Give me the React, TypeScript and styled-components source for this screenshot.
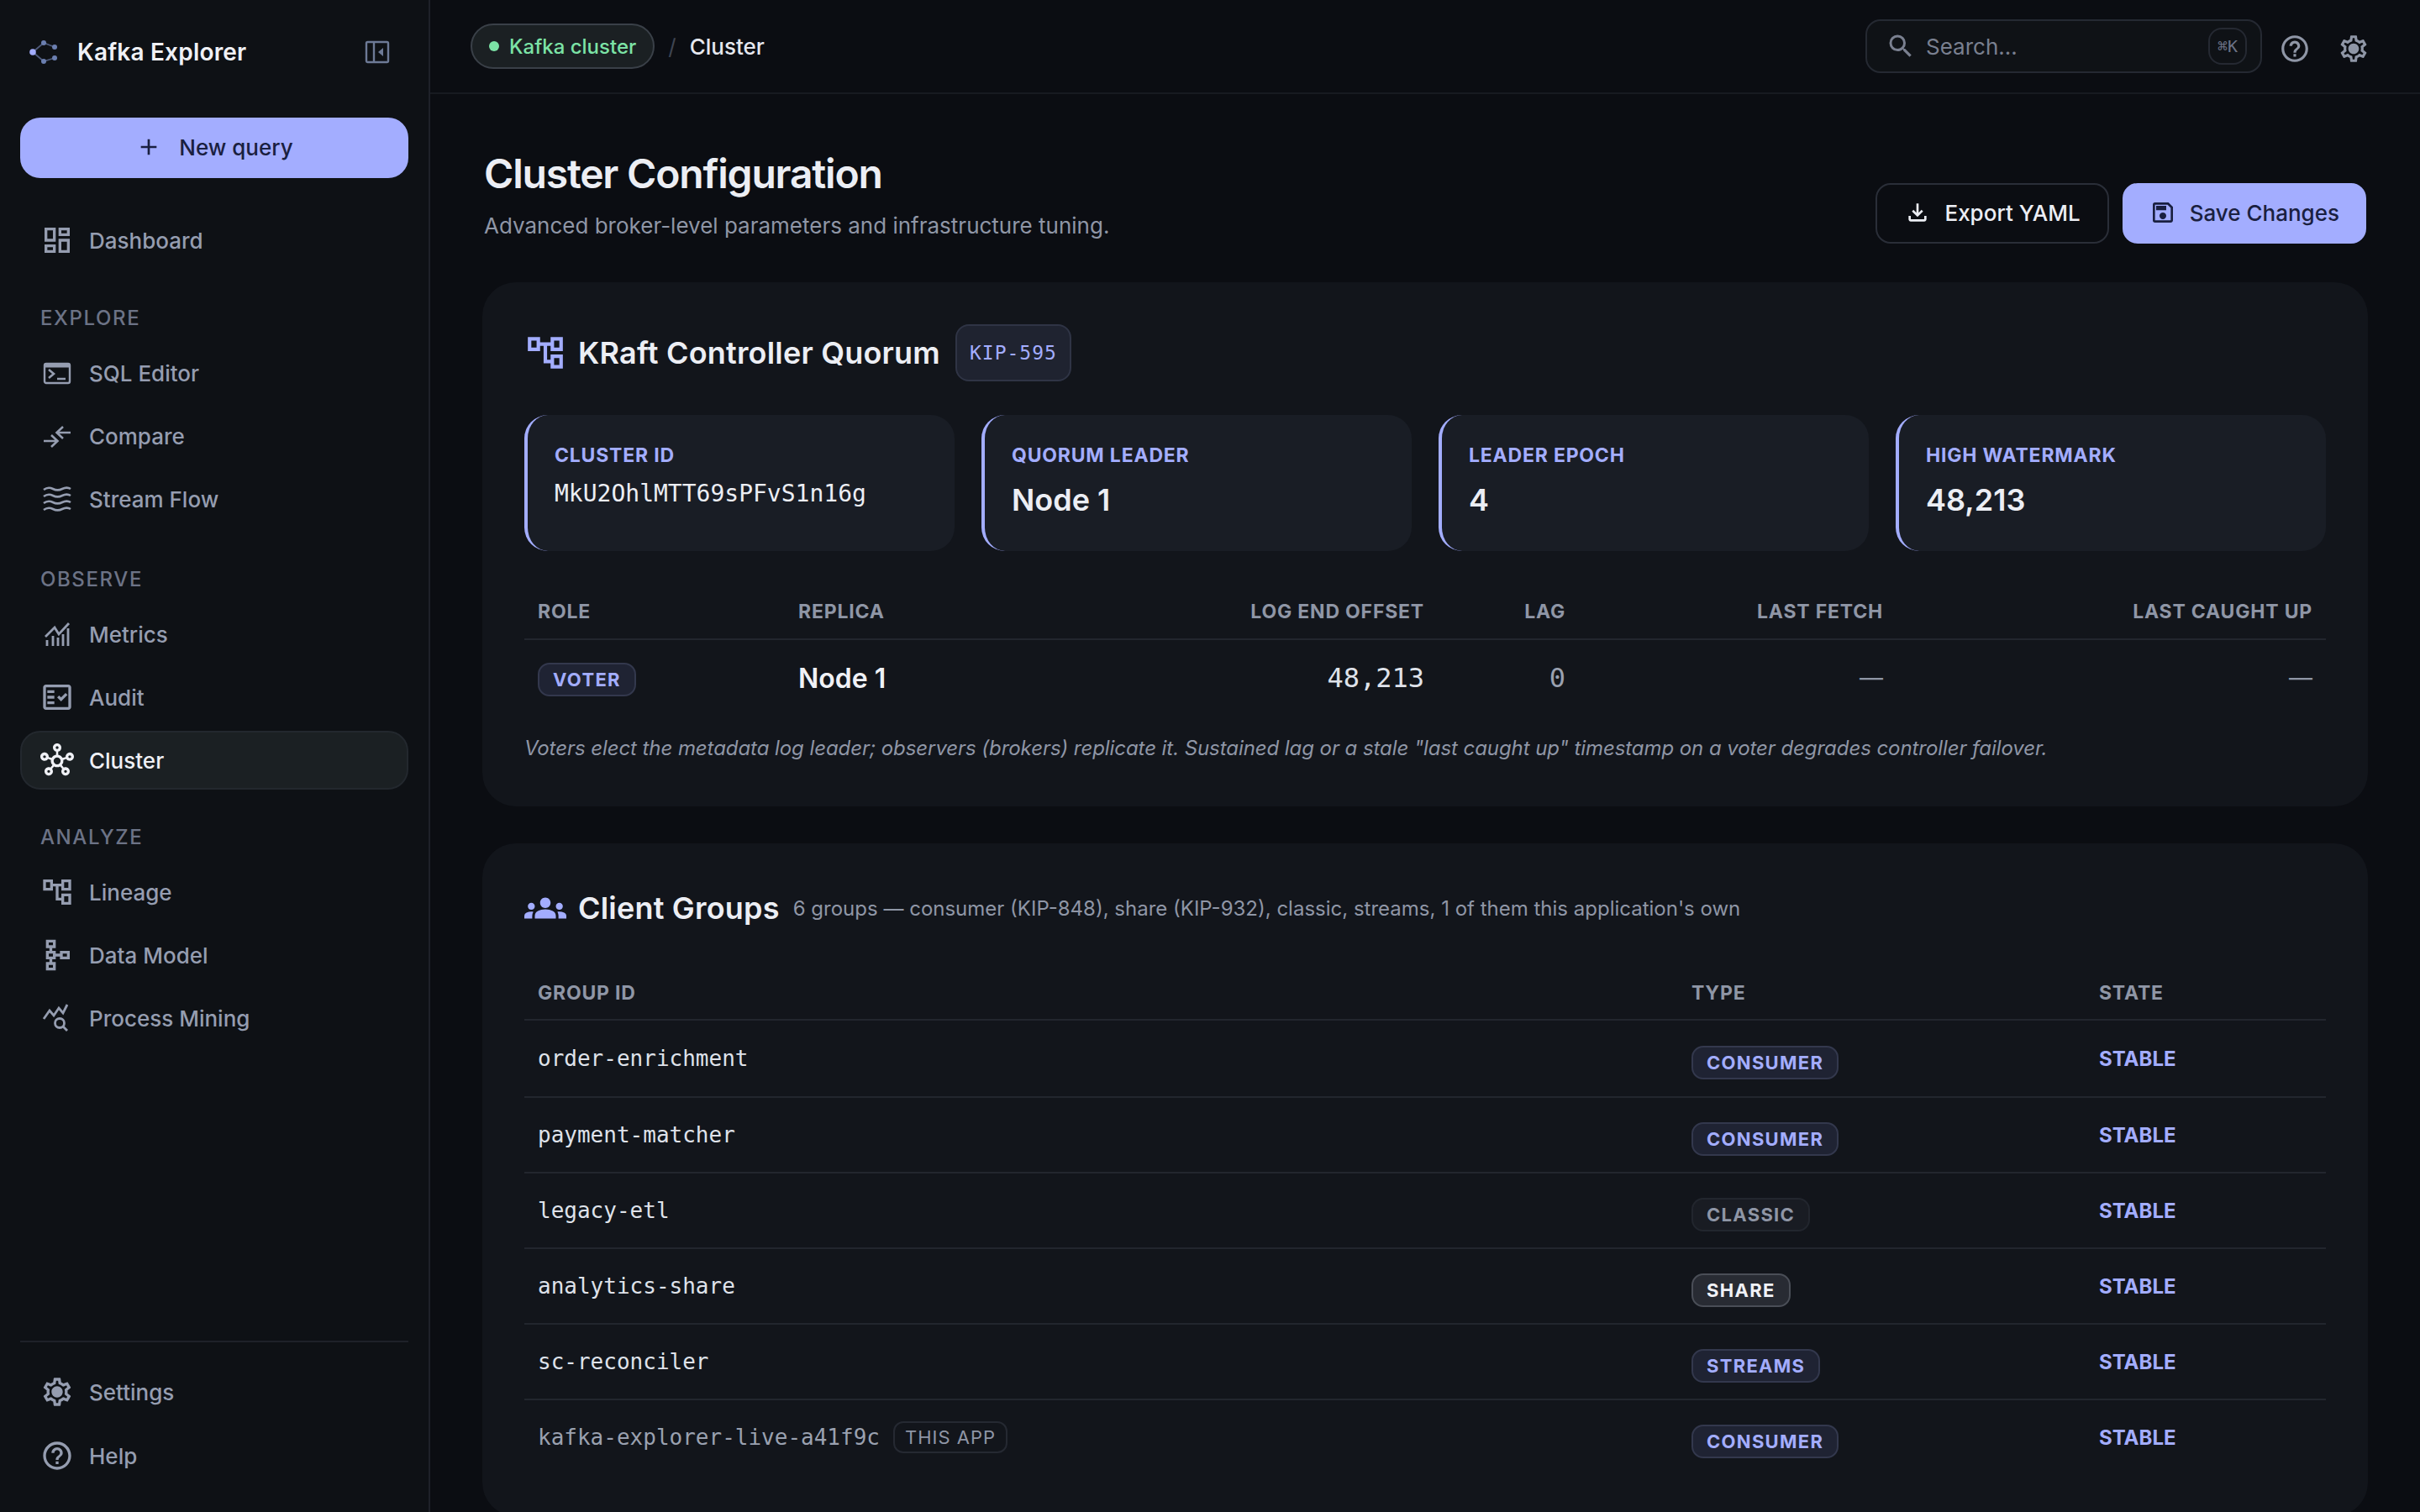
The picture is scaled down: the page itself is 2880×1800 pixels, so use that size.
import React from 'react';
import styled, { createGlobalStyle } from 'styled-components';
import {
  MdAdd,
  MdGroups,
  MdHelpOutline,
  MdOutlineAccountTree,
  MdOutlineDashboard,
  MdOutlineFactCheck,
  MdOutlineFileDownload,
  MdOutlineHub,
  MdOutlineSave,
  MdOutlineSchema,
  MdOutlineSettings,
  MdSearch,
} from 'react-icons/md';

const MONO = '"DejaVu Sans Mono", "Liberation Mono", monospace';

const GlobalStyle = createGlobalStyle`
  html, body {
    margin: 0;
    padding: 0;
    background: #0b0d12;
    font-family: Inter, "Noto Sans", sans-serif;
    color: #eceef4;
  }
  * { box-sizing: border-box; }
`;

const Shell = styled.div`
  display: flex;
  width: 2880px;
  height: 1800px;
  overflow: hidden;
`;

const Sidebar = styled.aside`
  flex: 0 0 512px;
  display: flex;
  flex-direction: column;
  padding: 0 24px 32px;
  background: #0e1115;
  border-right: 2px solid #1e2129;
`;

const Brand = styled.div`
  display: flex;
  align-items: center;
  height: 124px;
  padding-left: 6px;
`;

const BrandName = styled.span`
  margin-left: 22px;
  font-size: 28px;
  font-weight: 600;
  letter-spacing: 0.2px;
  color: #f0f1f6;
`;

const CollapseButton = styled.span`
  display: flex;
  margin-left: auto;
  margin-right: 22px;
`;

const NewQuery = styled.button`
  display: flex;
  align-items: center;
  justify-content: center;
  gap: 20px;
  height: 72px;
  margin-top: 16px;
  padding: 0 0 2px;
  border: 0;
  border-radius: 24px;
  background: #a3adff;
  color: #1a2040;
  font: 500 26px Inter, sans-serif;
`;

const NavSection = styled.nav<{ $gap: number }>`
  display: flex;
  flex-direction: column;
  gap: 5px;
  margin-top: ${(p) => p.$gap}px;
`;

const SectionLabel = styled.div`
  height: 32px;
  margin-bottom: 9px;
  padding-left: 24px;
  font-size: 24px;
  line-height: 32px;
  font-weight: 500;
  letter-spacing: 1.6px;
  color: #6c7386;
`;

const NavItem = styled.a<{ $active?: boolean }>`
  display: flex;
  align-items: center;
  height: 70px;
  padding-left: 22px;
  border: 2px solid ${(p) => (p.$active ? '#23282e' : 'transparent')};
  border-radius: 24px;
  background: ${(p) => (p.$active ? '#1b2023' : 'transparent')};
  color: ${(p) => (p.$active ? '#f0f1f6' : '#959db0')};
  font-size: 26px;
  font-weight: 500;
`;

const NavIcon = styled.span`
  display: flex;
  justify-content: center;
  width: 40px;
  margin-right: 18px;
  font-size: 40px;
`;

const SidebarFooter = styled.div`
  display: flex;
  flex-direction: column;
  gap: 6px;
  margin-top: auto;
  padding-top: 24px;
  border-top: 2px solid #1e2129;
`;

const GearWrap = styled.span`
  position: relative;
  display: flex;

  &::after {
    content: '';
    position: absolute;
    left: 50%;
    top: 50%;
    width: 30%;
    height: 30%;
    border-radius: 50%;
    background: currentColor;
    transform: translate(-50%, -50%);
  }
`;

const Main = styled.main`
  flex: 1;
  min-width: 0;
  display: flex;
  flex-direction: column;
`;

const TopBar = styled.header`
  flex: 0 0 112px;
  display: flex;
  align-items: center;
  padding: 0 60px 0 48px;
  border-bottom: 2px solid #171a20;
`;

const ClusterPill = styled.span`
  display: flex;
  align-items: center;
  gap: 12px;
  height: 54px;
  padding: 0 20px;
  border: 2px solid #3a4048;
  border-radius: 27px;
  background: #1b2023;
  color: #7ce3a6;
  font-size: 24px;
  font-weight: 500;
`;

const StatusDot = styled.i`
  width: 12px;
  height: 12px;
  border-radius: 50%;
  background: #7ce3a6;
`;

const Slash = styled.span`
  margin: 0 16px;
  color: #3f4552;
  font-size: 26px;
`;

const Crumb = styled.span`
  font-size: 26px;
  font-weight: 500;
  color: #e6e8ef;
`;

const SearchBox = styled.div`
  display: flex;
  align-items: center;
  width: 472px;
  height: 64px;
  margin-left: auto;
  padding: 0 16px 0 22px;
  border: 2px solid #252932;
  border-radius: 18px;
  background: #0f1216;
  color: #7a8090;
  font-size: 26px;
`;

const SearchHint = styled.span`
  margin-left: 12px;
`;

const Kbd = styled.kbd`
  display: flex;
  align-items: center;
  justify-content: center;
  width: 46px;
  height: 44px;
  margin-left: auto;
  border: 2px solid #252932;
  border-radius: 16px;
  color: #6c7386;
  font: 20px ${MONO};
`;

const TopIcon = styled.span<{ $gap: number }>`
  display: flex;
  margin: 6px 0 0 ${(p) => p.$gap}px;
  color: #8f96a6;
  font-size: 38px;
`;

const Content = styled.div`
  padding: 62px 62px 0;
`;

const PageHead = styled.div`
  display: flex;
  align-items: flex-end;
  justify-content: space-between;
`;

const PageTitle = styled.h1`
  margin: 0;
  padding-left: 2px;
  font-size: 48px;
  line-height: 66px;
  font-weight: 600;
  letter-spacing: -1.2px;
  color: #eceef4;
`;

const PageSub = styled.p`
  margin: 8px 0 0;
  padding-left: 2px;
  font-size: 26px;
  line-height: 42px;
  color: #8f96a6;
`;

const Actions = styled.div`
  display: flex;
  gap: 16px;
  padding-right: 2px;
`;

const ActionButton = styled.button<{ $primary?: boolean }>`
  display: flex;
  align-items: center;
  gap: 16px;
  height: 72px;
  padding: 0 ${(p) => (p.$primary ? 30 : 32)}px 2px;
  border: 2px solid ${(p) => (p.$primary ? '#a3adff' : '#2a2e38')};
  border-radius: 18px;
  background: ${(p) => (p.$primary ? '#a3adff' : 'transparent')};
  color: ${(p) => (p.$primary ? '#1a2040' : '#eceef4')};
  font: 500 26px Inter, sans-serif;
`;

const Card = styled.section<{ $gap: number }>`
  margin-top: ${(p) => p.$gap}px;
  padding: 50px;
  border-radius: 40px;
  background: #12151b;
`;

const CardHead = styled.div<{ $height: number }>`
  display: flex;
  align-items: center;
  height: ${(p) => p.$height}px;
`;

const CardIcon = styled.span`
  display: flex;
  justify-content: center;
  width: 50px;
  margin-right: 14px;
  color: #a3adff;
  font-size: 50px;
`;

const CardTitle = styled.h2`
  margin: 0;
  font-size: 36px;
  font-weight: 600;
  letter-spacing: 0.2px;
  color: #eceef4;
`;

const KipBadge = styled.span`
  display: flex;
  align-items: center;
  height: 68px;
  margin-left: 18px;
  padding: 0 15px;
  border: 2px solid #2f3445;
  border-radius: 16px;
  background: #1f2330;
  color: #a3adff;
  font: 23px ${MONO};
  letter-spacing: 1px;
`;

const CardSub = styled.span`
  margin-left: 16px;
  font-size: 24px;
  color: #8f96a6;
`;

const StatGrid = styled.div`
  display: grid;
  grid-template-columns: repeat(4, 1fr);
  gap: 32px;
  margin-top: 40px;
`;

const Stat = styled.div`
  height: 162px;
  padding: 32px 32px 0 32px;
  border-left: 4px solid #a3adff;
  border-radius: 28px;
  background: #191d25;
`;

const StatLabel = styled.div`
  font-size: 23px;
  line-height: 32px;
  font-weight: 700;
  letter-spacing: 0.8px;
  color: #a3adff;
`;

const StatValue = styled.div<{ $mono?: boolean }>`
  margin-top: ${(p) => (p.$mono ? 9 : 12)}px;
  font: ${(p) => (p.$mono ? `28px ${MONO}` : '600 36px Inter, sans-serif')};
  line-height: ${(p) => (p.$mono ? 42 : 50)}px;
  color: #eceef4;
`;

const QUORUM_COLS = '310px 300px 477px 168px 378px 511px';
const GROUP_COLS = '1373px 485px 286px';

const Row = styled.div<{ $cols: string; $header?: boolean; $height: number; $top?: number }>`
  display: grid;
  grid-template-columns: ${(p) => p.$cols};
  align-items: center;
  height: ${(p) => p.$height}px;
  margin-top: ${(p) => p.$top ?? 0}px;
  border-bottom: ${(p) => (p.$header ? '2px solid #22262e' : '0')};
`;

const GroupRow = styled(Row)`
  & + & {
    border-top: 2px solid #22262e;
  }
`;

const HeadCell = styled.div<{ $right?: boolean }>`
  padding: 0 16px;
  text-align: ${(p) => (p.$right ? 'right' : 'left')};
  font-size: 23px;
  font-weight: 700;
  letter-spacing: 0.8px;
  color: #8f96a6;
`;

const Cell = styled.div<{ $right?: boolean }>`
  display: flex;
  align-items: center;
  justify-content: ${(p) => (p.$right ? 'flex-end' : 'flex-start')};
  padding: 0 16px;
`;

const Strong = styled.span`
  font-size: 32px;
  font-weight: 600;
  color: #f0f1f6;
`;

const Mono = styled.span<{ $dim?: boolean; $size?: number }>`
  font: ${(p) => p.$size ?? 26}px ${MONO};
  color: ${(p) => (p.$dim ? '#9aa1b0' : '#dfe2ea')};
`;

const Dash = styled.span`
  font-size: 28px;
  color: #8f96a6;
`;

const TONES = {
  indigo: { bg: '#1f2333', border: '#33384d', color: '#a3adff' },
  muted: { bg: '#191c23', border: '#22262e', color: '#8f96a6' },
  light: { bg: '#282b33', border: '#4a4e57', color: '#f0f1f6' },
};

const Badge = styled.span<{ $tone: keyof typeof TONES; $nudge?: number }>`
  display: inline-flex;
  align-items: center;
  height: 40px;
  margin-top: ${(p) => p.$nudge ?? 10}px;
  padding: 0 16px;
  border: 2px solid ${(p) => TONES[p.$tone].border};
  border-radius: 14px;
  background: ${(p) => TONES[p.$tone].bg};
  color: ${(p) => TONES[p.$tone].color};
  font-size: 22px;
  font-weight: 700;
  letter-spacing: 1.3px;
`;

const StateText = styled.span`
  font-size: 24px;
  font-weight: 700;
  color: #a3adff;
`;

const ThisApp = styled.span`
  margin-left: 16px;
  padding: 4px 12px;
  border: 2px solid #252932;
  border-radius: 12px;
  color: #8f96a6;
  font-size: 22px;
  letter-spacing: 1px;
`;

const Note = styled.p`
  margin: 20px 0 0;
  font-size: 24px;
  line-height: 38px;
  font-style: italic;
  letter-spacing: -0.07px;
  color: #8f96a6;
`;

const LogoMark = () => (
  <svg width="40" height="40" viewBox="0 0 40 40" fill="none">
    <path d="M9 20 22 9l13 5M9 20l13 11 13-4" stroke="#4e5a7a" strokeWidth="1.8" />
    <circle cx="9" cy="20" r="3.8" fill="#a3adff" />
    <g fill="#6b7fb0">
      <circle cx="22" cy="9" r="3" />
      <circle cx="35" cy="14" r="3" />
      <circle cx="22" cy="31" r="3" />
      <circle cx="35" cy="27" r="3" />
    </g>
  </svg>
);

const CollapseIcon = () => (
  <svg width="30" height="30" viewBox="0 0 30 30" fill="none" stroke="#6d7a96" strokeWidth="2.4">
    <rect x="2" y="3" width="26" height="24" rx="1.5" />
    <path d="M11 3v24" />
    <path d="M22 10v10l-6-5z" fill="#6d7a96" stroke="none" />
  </svg>
);

const TerminalIcon = () => (
  <svg width="40" height="40" viewBox="0 0 40 40" fill="none" stroke="currentColor">
    <rect x="5" y="9" width="30" height="23" rx="2" strokeWidth="2.4" />
    <path d="M5 11h30" strokeWidth="5" />
    <path d="m10 16 6 5-6 5M20 27h10" strokeWidth="2.6" />
  </svg>
);

const CompareIcon = () => (
  <svg width="40" height="40" viewBox="0 0 40 40" fill="none" stroke="currentColor" strokeWidth="2.6">
    <path d="M36 16H20M27 9l-7.5 7 7.5 7" />
    <path d="M4 26h16M13 19l7.5 7-7.5 7" />
  </svg>
);

const WaterIcon = () => (
  <svg width="40" height="40" viewBox="0 0 40 40" fill="none" stroke="currentColor" strokeWidth="2.6">
    {[9, 17, 25, 33].map((y) => (
      <path key={y} d={`M4 ${y}c4-3 7-3 11-1s7 2 11 0 7-2 10 0`} />
    ))}
  </svg>
);

const MonitoringIcon = () => (
  <svg width="40" height="40" viewBox="0 0 40 40" fill="none" stroke="currentColor" strokeWidth="2.8">
    <path d="M6 23 17 12l5 8L34 7" />
    <path d="M8 34v-7M15 34V22M21 34V24M27 34V20M33 34V13" />
  </svg>
);

const ProcessIcon = () => (
  <svg width="40" height="40" viewBox="0 0 40 40" fill="none" stroke="currentColor" strokeWidth="2.8">
    <path d="m4 21 7-10 5 6 6-9 5 6 5-10" />
    <circle cx="23" cy="26" r="5.5" />
    <path d="m27 30 5 5" />
  </svg>
);

const Gear = () => (
  <GearWrap>
    <MdOutlineSettings />
  </GearWrap>
);

const App: React.FC = () => {
  const quorumHead = ['ROLE', 'REPLICA', 'LOG END OFFSET', 'LAG', 'LAST FETCH', 'LAST CAUGHT UP'];
  const groups: [string, keyof typeof TONES, string][] = [
    ['order-enrichment', 'indigo', 'CONSUMER'],
    ['payment-matcher', 'indigo', 'CONSUMER'],
    ['legacy-etl', 'muted', 'CLASSIC'],
    ['analytics-share', 'light', 'SHARE'],
    ['sc-reconciler', 'indigo', 'STREAMS'],
    ['kafka-explorer-live-a41f9c', 'indigo', 'CONSUMER'],
  ];

  return (
    <>
      <GlobalStyle />
      <Shell>
        <Sidebar>
          <Brand>
            <LogoMark />
            <BrandName>Kafka Explorer</BrandName>
            <CollapseButton>
              <CollapseIcon />
            </CollapseButton>
          </Brand>
          <NewQuery>
            <MdAdd size={32} />
            New query
          </NewQuery>
          <NavSection $gap={39}>
            <NavItem>
              <NavIcon><MdOutlineDashboard /></NavIcon>
              Dashboard
            </NavItem>
          </NavSection>
          <NavSection $gap={42}>
            <SectionLabel>EXPLORE</SectionLabel>
            <NavItem>
              <NavIcon><TerminalIcon /></NavIcon>
              SQL Editor
            </NavItem>
            <NavItem>
              <NavIcon><CompareIcon /></NavIcon>
              Compare
            </NavItem>
            <NavItem>
              <NavIcon><WaterIcon /></NavIcon>
              Stream Flow
            </NavItem>
          </NavSection>
          <NavSection $gap={45}>
            <SectionLabel>OBSERVE</SectionLabel>
            <NavItem>
              <NavIcon><MonitoringIcon /></NavIcon>
              Metrics
            </NavItem>
            <NavItem>
              <NavIcon><MdOutlineFactCheck /></NavIcon>
              Audit
            </NavItem>
            <NavItem $active>
              <NavIcon><MdOutlineHub /></NavIcon>
              Cluster
            </NavItem>
          </NavSection>
          <NavSection $gap={41}>
            <SectionLabel>ANALYZE</SectionLabel>
            <NavItem>
              <NavIcon><MdOutlineAccountTree /></NavIcon>
              Lineage
            </NavItem>
            <NavItem>
              <NavIcon><MdOutlineSchema /></NavIcon>
              Data Model
            </NavItem>
            <NavItem>
              <NavIcon><ProcessIcon /></NavIcon>
              Process Mining
            </NavItem>
          </NavSection>
          <SidebarFooter>
            <NavItem>
              <NavIcon><Gear /></NavIcon>
              Settings
            </NavItem>
            <NavItem>
              <NavIcon><MdHelpOutline /></NavIcon>
              Help
            </NavItem>
          </SidebarFooter>
        </Sidebar>
        <Main>
          <TopBar>
            <ClusterPill>
              <StatusDot />
              Kafka cluster
            </ClusterPill>
            <Slash>/</Slash>
            <Crumb>Cluster</Crumb>
            <SearchBox>
              <MdSearch size={36} />
              <SearchHint>Search...</SearchHint>
              <Kbd>⌘K</Kbd>
            </SearchBox>
            <TopIcon $gap={20}><MdHelpOutline /></TopIcon>
            <TopIcon $gap={32}><Gear /></TopIcon>
          </TopBar>
          <Content>
            <PageHead>
              <div>
                <PageTitle>Cluster Configuration</PageTitle>
                <PageSub>Advanced broker-level parameters and infrastructure tuning.</PageSub>
              </div>
              <Actions>
                <ActionButton>
                  <MdOutlineFileDownload size={32} />
                  Export YAML
                </ActionButton>
                <ActionButton $primary>
                  <MdOutlineSave size={32} />
                  Save Changes
                </ActionButton>
              </Actions>
            </PageHead>

            <Card $gap={46}>
              <CardHead $height={68}>
                <CardIcon><MdOutlineAccountTree /></CardIcon>
                <CardTitle>KRaft Controller Quorum</CardTitle>
                <KipBadge>KIP-595</KipBadge>
              </CardHead>
              <StatGrid>
                <Stat>
                  <StatLabel>CLUSTER ID</StatLabel>
                  <StatValue $mono>MkU2OhlMTT69sPFvS1n16g</StatValue>
                </Stat>
                <Stat>
                  <StatLabel>QUORUM LEADER</StatLabel>
                  <StatValue>Node 1</StatValue>
                </Stat>
                <Stat>
                  <StatLabel>LEADER EPOCH</StatLabel>
                  <StatValue>4</StatValue>
                </Stat>
                <Stat>
                  <StatLabel>HIGH WATERMARK</StatLabel>
                  <StatValue>48,213</StatValue>
                </Stat>
              </StatGrid>
              <Row $cols={QUORUM_COLS} $header $height={66} $top={40}>
                {quorumHead.map((h, i) => (
                  <HeadCell key={h} $right={i > 1}>{h}</HeadCell>
                ))}
              </Row>
              <Row $cols={QUORUM_COLS} $height={90}>
                <Cell><Badge $tone="indigo" $nudge={4}>VOTER</Badge></Cell>
                <Cell><Strong>Node 1</Strong></Cell>
                <Cell $right><Mono $size={32}>48,213</Mono></Cell>
                <Cell $right><Mono $size={32} $dim>0</Mono></Cell>
                <Cell $right><Dash>—</Dash></Cell>
                <Cell $right><Dash>—</Dash></Cell>
              </Row>
              <Note>
                Voters elect the metadata log leader; observers (brokers) replicate it. Sustained lag or a stale "last caught up" timestamp on a voter degrades controller failover.
              </Note>
            </Card>

            <Card $gap={44}>
              <CardHead $height={54}>
                <CardIcon><MdGroups /></CardIcon>
                <CardTitle>Client Groups</CardTitle>
                <CardSub>6 groups — consumer (KIP-848), share (KIP-932), classic, streams, 1 of them this application's own</CardSub>
              </CardHead>
              <Row $cols={GROUP_COLS} $header $height={65} $top={42}>
                <HeadCell>GROUP ID</HeadCell>
                <HeadCell>TYPE</HeadCell>
                <HeadCell>STATE</HeadCell>
              </Row>
              {groups.map(([name, tone, type], i) => (
                <GroupRow key={name} $cols={GROUP_COLS} $height={90}>
                  <Cell>
                    <Mono $dim={i === 5}>{name}</Mono>
                    {i === 5 && <ThisApp>THIS APP</ThisApp>}
                  </Cell>
                  <Cell><Badge $tone={tone}>{type}</Badge></Cell>
                  <Cell><StateText>STABLE</StateText></Cell>
                </GroupRow>
              ))}
            </Card>
          </Content>
        </Main>
      </Shell>
    </>
  );
};

export default App;
